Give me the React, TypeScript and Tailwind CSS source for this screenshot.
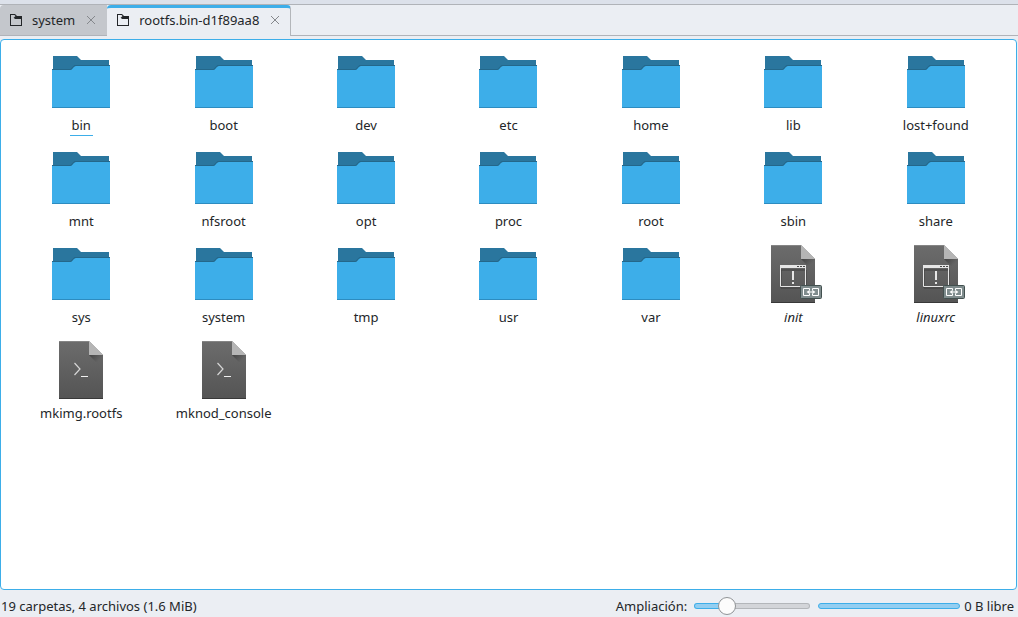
import { useState } from "react";

type Kind = "folder" | "link" | "script";
type Entry = { name: string; kind: Kind };

const folders = [
  "bin", "boot", "dev", "etc", "home", "lib", "lost+found",
  "mnt", "nfsroot", "opt", "proc", "root", "sbin", "share",
  "sys", "system", "tmp", "usr", "var",
];

const entries: Entry[] = [
  ...folders.map((name): Entry => ({ name, kind: "folder" })),
  { name: "init", kind: "link" },
  { name: "linuxrc", kind: "link" },
  { name: "mkimg.rootfs", kind: "script" },
  { name: "mknod_console", kind: "script" },
];

function FolderIcon() {
  return (
    <svg viewBox="0 0 64 64" className="size-16 shrink-0" aria-hidden="true">
      <path d="M4 6H28L32 10H60V24H4Z" fill="#2a769e" />
      <path d="M3 19H21.5L25.5 15H61V17H27L23 21H3Z" fill="#24678a" />
      <path d="M3 20H21.5C23.5 20 24.5 16 27 16H61V58H3Z" fill="#3daee9" />
      <path d="M3 57H61V58H3Z" fill="#2d8cc0" />
    </svg>
  );
}

function Page() {
  return (
    <>
      <defs>
        <linearGradient id="page" x1="0" y1="1" x2="0" y2="0">
          <stop offset="0" stopColor="#545454" />
          <stop offset="1" stopColor="#6c6c6c" />
        </linearGradient>
        <linearGradient id="fold" x1="40" y1="17" x2="54" y2="31" gradientUnits="userSpaceOnUse">
          <stop offset="0" stopColor="#000" stopOpacity="0.35" />
          <stop offset="0.55" stopColor="#000" stopOpacity="0" />
        </linearGradient>
      </defs>
      <path d="M10 3H40L54 17V61H10Z" fill="url(#page)" />
      <path d="M10 3H40V4H10Z" fill="#858585" />
      <path d="M10 60H54V61H10Z" fill="#383838" />
      <path d="M40 17H54V31Z" fill="url(#fold)" />
      <path d="M40 3L54 17H40Z" fill="#b5b5b5" />
    </>
  );
}

function ScriptIcon() {
  return (
    <svg viewBox="0 0 64 64" className="size-16 shrink-0" aria-hidden="true">
      <Page />
      <path d="M25.5 25L31 31L25.5 37" fill="none" stroke="#d6d6d6" strokeWidth="1.2" />
      <path d="M32 38H39V39H32Z" fill="#f0f0f0" />
    </svg>
  );
}

function LinkIcon() {
  return (
    <svg viewBox="0 0 64 64" className="size-16 shrink-0" aria-hidden="true">
      <Page />
      <path d="M20 28H45V46H20Z" fill="none" stroke="#3f3f3f" />
      <path d="M19.5 23.5H44.5V44.5H19.5Z" fill="none" stroke="#e6e6e6" />
      <path d="M19 23H45V26H19Z" fill="#e6e6e6" />
      <path d="M36 24H38V25H36ZM39 24H41V25H39ZM42 24H44V25H42Z" fill="#4a4a4a" />
      <path d="M31 29H33V38H31ZM31 40H33V42H31Z" fill="#e6e6e6" />
      <rect x="39.5" y="43.5" width="21" height="13" rx="1" fill="#7f8c8d" stroke="#42504f" />
      <path d="M48.5 48.5V46.5H42.5V53.5H48.5V51.5M51.5 48.5V46.5H57.5V53.5H51.5V51.5" fill="none" stroke="#fff" />
      <path d="M45.5 50L48.5 48V49.5H51.5V48L54.5 50L51.5 52V50.5H48.5V52Z" fill="#fff" />
    </svg>
  );
}

const icons = { folder: FolderIcon, link: LinkIcon, script: ScriptIcon };

function TabFolder() {
  return (
    <svg viewBox="0 0 14 14" className="size-3.5 shrink-0" aria-hidden="true">
      <path
        d="M1 1H6L8 3H13V13H1ZM2 2H5.5L6.5 3L4.5 5H2ZM2 5H5L6 6H12V12H2Z"
        fill="#232629"
        fillRule="evenodd"
      />
    </svg>
  );
}

function Tab({ label, active, onSelect }: { label: string; active: boolean; onSelect: () => void }) {
  return (
    <div
      className={
        active
          ? "flex items-center gap-2 rounded-t-sm border-t-3 border-r border-[#3daee9] border-r-[#b3b6ba] pr-2.5 pb-1 pl-[9px]"
          : "flex items-center gap-2 rounded-tl-sm border-b border-[#b0b3b8] bg-[#c4c7cc] pr-[11px] pl-[9px]"
      }
    >
      <button type="button" role="tab" aria-selected={active} onClick={onSelect} className="flex items-center gap-[9px] pr-[3px]">
        <TabFolder />
        {label}
      </button>
      <button type="button" aria-label={`Cerrar ${label}`}>
        <svg viewBox="0 0 10 10" className="size-2.5" aria-hidden="true">
          <path d="M1 1L9 9M9 1L1 9" stroke="#85888c" fill="none" />
        </svg>
      </button>
    </div>
  );
}

export default function App() {
  const [tab, setTab] = useState(1);
  const [zoom, setZoom] = useState(24);
  const fill = `calc(9px + (100% - 18px) * ${zoom / 100})`;
  const track = `linear-gradient(to right, #93cef1 ${fill}, #d3d5d9 ${fill}) padding-box, linear-gradient(to right, #3daee9 ${fill}, #b3b6ba ${fill}) border-box`;
  return (
    <div className="flex min-h-screen flex-col bg-[#ebeef3] font-['Noto_Sans',sans-serif] text-[13px] leading-[18px] text-[#232629]">
      <header className="flex h-9 border-t-4 border-[#dce1ea]">
        <div className="flex flex-1 border-t border-[#b0b3b8]">
          <div role="tablist" className="flex">
            {["system", "rootfs.bin-d1f89aa8"].map((label, i) => (
              <Tab key={label} label={label} active={tab === i} onSelect={() => setTab(i)} />
            ))}
          </div>
          <div className="flex-1 border-b border-[#b0b3b8]" />
        </div>
      </header>
      <main className="mt-[3px] mr-px flex-1 rounded-sm border border-[#3daee9] bg-white px-[9px] pt-2.5">
        <ul className="grid grid-cols-7">
          {entries.map(({ name, kind }, i) => {
            const Icon = icons[kind];
            return (
              <li key={name} className="flex h-24 flex-col items-center">
                <Icon />
                <span
                  className={
                    kind === "link"
                      ? "mt-0.5 italic"
                      : i === 0
                        ? "mt-0.5 border-b border-[#3daee9] px-0.5 pb-px"
                        : "mt-0.5"
                  }
                >
                  {name}
                </span>
              </li>
            );
          })}
        </ul>
      </main>
      <footer className="flex h-[27px] items-center pt-1.5 pr-1 pb-0.5 pl-px">
        <span className="flex-1">19 carpetas, 4 archivos (1.6 MiB)</span>
        <label htmlFor="zoom" className="mr-[7px]">Ampliación:</label>
        <input
          id="zoom"
          type="range"
          value={zoom}
          onChange={(e) => setZoom(Number(e.target.value))}
          style={{ background: track }}
          className="h-1.5 w-[116px] appearance-none rounded-full border border-transparent [&::-webkit-slider-thumb]:size-[18px] [&::-webkit-slider-thumb]:appearance-none [&::-webkit-slider-thumb]:rounded-full [&::-webkit-slider-thumb]:border [&::-webkit-slider-thumb]:border-[#909396] [&::-webkit-slider-thumb]:bg-[#fcfcfc]"
        />
        <div role="progressbar" aria-label="Espacio en disco" aria-valuenow={100} className="mr-1 ml-2 h-1.5 w-[142px] rounded-full border border-[#3daee9] bg-[#93cef1]" />
        <span>0 B libre</span>
      </footer>
    </div>
  );
}
